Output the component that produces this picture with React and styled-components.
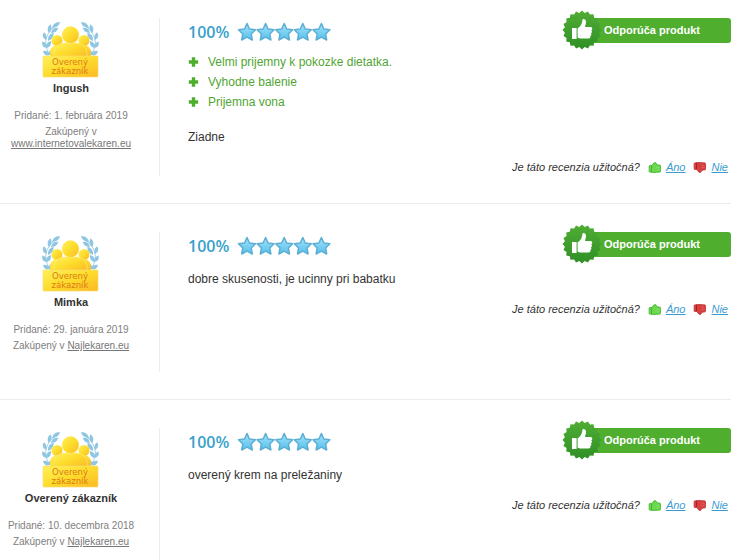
import React from "react";
import styled, { createGlobalStyle } from "styled-components";

const reviews = [
  {
    name: "Ingush",
    date: "1. februára 2019",
    shop: "www.internetovalekaren.eu",
    pros: ["Velmi prijemny k pokozke dietatka.", "Vyhodne balenie", "Prijemna vona"],
    text: "Ziadne",
  },
  {
    name: "Mimka",
    date: "29. januára 2019",
    shop: "Najlekaren.eu",
    pros: [],
    text: "dobre skusenosti, je ucinny pri babatku",
  },
  {
    name: "Overený zákazník",
    date: "10. decembra 2018",
    shop: "Najlekaren.eu",
    pros: [],
    text: "overený krem na preležaniny",
  },
];

const STAR = "M10 1.5 12.5 7 18.5 7.8 14.2 12 15.3 18 10 15.1 4.7 18 5.8 12 1.5 7.8 7.5 7z";

const THUMB =
  "M10 19h4.6v11H10zM15.6 19.4c2.6-1.6 4.4-4 4.8-8.2 0-1.8 3.6-1.4 3.6 1.6 0 2-.7 3.6-1 5.2h5.4c2.2 0 2.4 2.6.8 3.2 1.2.7 1 2.6-.3 3 .9.8.6 2.4-.6 2.8.6 1.2-.2 2.6-1.8 2.6h-7.4c-1.4 0-2.4-.5-3.5-1.2z";

const seal = Array.from({ length: 40 }, (_, i) => {
  const r = i % 2 ? 17.3 : 19.5;
  const a = (i * Math.PI) / 20;
  return `${(20 + r * Math.cos(a)).toFixed(1)},${(20 + r * Math.sin(a)).toFixed(1)}`;
}).join(" ");

// x, y, length, angle
const leaves = [
  [8, 36, 8, -150],
  [5, 29, 8, -125],
  [4, 21, 8, -105],
  [7, 14, 9, -80],
  [10, 9, 10, -35],
  [7, 36, 7, -50],
  [5, 29, 8, -60],
  [6, 22, 10, -55],
  [9, 14, 9, -35],
];

const Laurel = () => (
  <g>
    <path d="M12 39C2 32 0 18 12 8" fill="none" stroke="#8fc6e2" strokeWidth="0.8" />
    {leaves.map(([x, y, len, angle]) => (
      <path
        key={`${x}-${y}-${angle}`}
        d={`M0 0Q${len / 2} -4.4 ${len} 0Q${len / 2} 3.4 0 0z`}
        transform={`translate(${x} ${y}) rotate(${angle})`}
      />
    ))}
  </g>
);

const VerifiedBadge = ({ id }) => (
  <svg width="58" height="60" viewBox="0 0 58 60" role="img" aria-label="Overený zákazník">
    <defs>
      <linearGradient id={id} x1="0" y1="0" x2="1" y2="1">
        <stop offset="0" stopColor="#fff05a" />
        <stop offset="0.5" stopColor="#fddc2c" />
        <stop offset="1" stopColor="#fbb926" />
      </linearGradient>
    </defs>
    <g fill="#8fc6e2">
      <Laurel />
      <g transform="translate(57 0) scale(-1 1)">
        <Laurel />
      </g>
    </g>
    <g fill={`url(#${id})`}>
      <circle cx="15" cy="21.5" r="5.5" />
      <circle cx="42" cy="21.5" r="5.5" />
      <path d="M8 38V34q0-7 7-8h27q7 1 7 8v4z" />
      <g stroke="#ffee80" strokeWidth="0.6">
        <path d="M12 38V34q1-9 10-10h13q9 1 10 10v4z" />
        <circle cx="28.5" cy="16" r="8.5" />
      </g>
      <rect x="1" y="37" width="55" height="21" rx="1" stroke="#fbdc70" strokeWidth="0.7" />
    </g>
    <g fill="#dc7a14" fontFamily="'DejaVu Sans', sans-serif" fontSize="8.5" textAnchor="middle">
      <text x="28" y="46">Overený</text>
      <text x="28" y="55">zákazník</text>
    </g>
  </svg>
);

const Stars = ({ id }) => (
  <svg width="94" height="20" viewBox="0 0 94 20" aria-hidden="true">
    <defs>
      <linearGradient id={id} x1="0" y1="0" x2="0" y2="1">
        <stop offset="0" stopColor="#a5e2f9" />
        <stop offset="1" stopColor="#55c0ec" />
      </linearGradient>
    </defs>
    {[0, 1, 2, 3, 4].map((n) => (
      <path
        key={n}
        d={STAR}
        transform={`translate(${n * 18.6} 0)`}
        fill={`url(#${id})`}
        stroke="#5cafd3"
        strokeWidth="1.5"
        strokeLinejoin="round"
      />
    ))}
  </svg>
);

const Plus = () => (
  <svg width="11" height="10" viewBox="0 0 10 10" aria-hidden="true">
    <path d="M3.3 0.3h3.4v3h3v3.4h-3v3H3.3v-3h-3V3.3h3z" fill="#50ae2f" />
  </svg>
);

const Vote = ({ down }) => (
  <svg width="14" height="13" viewBox="0 0 14 13" aria-hidden="true">
    <g transform={down ? "translate(0 13) scale(1 -1)" : undefined}>
      <path
        d="M1.2 4.8 4 4.4 5.8 2Q8 0.4 8.8 3.8L12.2 4.2Q13 7.5 12.2 11L4.5 11.5 1.2 10.8z"
        fill={down ? "#d84040" : "#6bd84f"}
        stroke={down ? "#c43a3a" : "#4cbd38"}
        strokeLinejoin="round"
      />
      <path d="M3.5 5v6" stroke={down ? "#a92020" : "#46b233"} />
      <path d="M8.5 6.5h3M8.5 8.8h3" stroke={down ? "#ec6666" : "#8ce774"} strokeWidth="0.7" />
    </g>
  </svg>
);

const Review = ({ review, index }) => (
  <Item>
    <Author>
      <VerifiedBadge id={`gold-${index}`} />
      <Name>{review.name}</Name>
      <Meta>Pridané: {review.date}</Meta>
      <Meta>
        Zakúpený v <ShopLink href="#shop">{review.shop}</ShopLink>
      </Meta>
    </Author>
    <Body>
      <Top>
        <Rating>
          100% <Stars id={`star-${index}`} />
        </Rating>
        <Recommend>
          <Seal viewBox="0 0 40 40" aria-hidden="true">
            <defs>
              <linearGradient id={`seal-${index}`} x1="0" y1="0" x2="0" y2="1">
                <stop offset="0" stopColor="#50ae35" />
                <stop offset="1" stopColor="#2f8f25" />
              </linearGradient>
            </defs>
            <polygon points={seal} fill={`url(#seal-${index})`} />
            <path d={THUMB} transform="translate(0 -1)" fill="#fff" />
          </Seal>
          Odporúča produkt
        </Recommend>
      </Top>
      {review.pros.length > 0 && (
        <Pros>
          {review.pros.map((pro) => (
            <li key={pro}>
              <Plus />
              {pro}
            </li>
          ))}
        </Pros>
      )}
      <Text>{review.text}</Text>
      <Useful>
        <em>Je táto recenzia užitočná?</em>
        <VoteLink href="#yes">
          <Vote />
          <span>Áno</span>
        </VoteLink>
        <VoteLink href="#no">
          <Vote down />
          <span>Nie</span>
        </VoteLink>
      </Useful>
    </Body>
  </Item>
);

const App = () => (
  <>
    <GlobalStyle />
    <List>
      {reviews.map((review, index) => (
        <Review key={review.name} review={review} index={index} />
      ))}
    </List>
  </>
);

export default App;

const GlobalStyle = createGlobalStyle`
  * {
    box-sizing: border-box;
  }
  body {
    margin: 0;
    background: #fff;
    color: #333;
    font-family: "Liberation Sans", Arial, sans-serif;
    font-size: 12px;
  }
  svg {
    flex-shrink: 0;
  }
`;

const List = styled.main`
  padding: 18px 19px 0 0;
`;

const Item = styled.article`
  display: flex;
  padding-bottom: 27px;
  margin-bottom: 28px;
  border-bottom: 1px solid #ececec;
`;

const Author = styled.aside`
  display: flex;
  flex-direction: column;
  align-items: center;
  flex: 0 0 160px;
  padding: 1px 17px 16px 0;
  border-right: 1px solid #ececec;
  text-align: center;
`;

const Name = styled.strong`
  margin: 1px 0 14px;
  font-size: 11px;
  line-height: 16px;
  white-space: nowrap;
`;

const Meta = styled.p`
  margin: 0 0 4px;
  color: #808080;
  font-size: 10px;
  line-height: 12px;
`;

const ShopLink = styled.a`
  color: #777;
`;

const Body = styled.div`
  flex: 1;
  padding-left: 28px;
`;

const Top = styled.div`
  display: flex;
  justify-content: space-between;
  height: 32px;
`;

const Rating = styled.div`
  display: flex;
  align-items: center;
  gap: 8px;
  height: 27px;
  color: #3a9fcb;
  font-family: "Open Sans", sans-serif;
  font-size: 16px;
  font-weight: 600;
`;

const Recommend = styled.div`
  position: relative;
  width: 149px;
  height: 25px;
  padding-left: 22px;
  border-radius: 3px;
  background: #50ae2f;
  color: #fff;
  font-size: 11px;
  font-weight: bold;
  line-height: 25px;
`;

const Seal = styled.svg`
  position: absolute;
  top: -8px;
  left: -20px;
  width: 40px;
  height: 40px;
`;

const Pros = styled.ul`
  margin: 2px 0 16px;
  padding: 0;
  list-style: none;
  color: #50a532;
  line-height: 20px;

  li {
    display: flex;
    align-items: center;
    gap: 9px;
  }
`;

const Text = styled.p`
  margin: 6px 0 12px;
  line-height: 18px;
`;

const Useful = styled.div`
  display: flex;
  align-items: center;
  justify-content: flex-end;
  gap: 8px;
  padding-right: 3px;
  font-size: 11px;
  line-height: 18px;
`;

const VoteLink = styled.a`
  display: flex;
  align-items: center;
  gap: 4px;
  color: #3b9bd0;
  font-style: italic;
  text-decoration: none;

  span {
    text-decoration: underline;
  }
`;
